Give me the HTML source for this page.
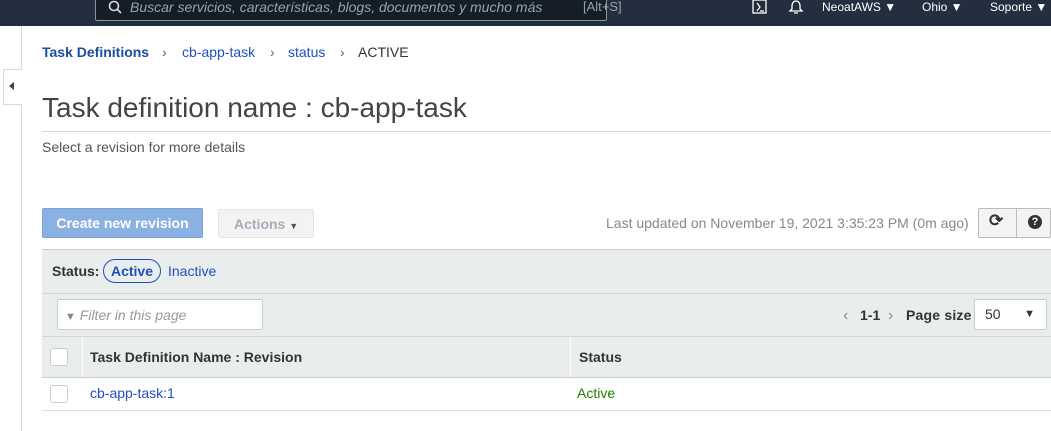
<!DOCTYPE html>
<html><head><style>
*{box-sizing:border-box;margin:0;padding:0}
body{width:1051px;height:431px;overflow:hidden;background:#fff;font-family:"Liberation Sans",sans-serif;position:relative;color:#444}
.a{position:absolute}
.nav{left:0;top:0;width:1051px;height:26px;background:#232f3e}
.search{left:95px;top:-6px;width:512px;height:27px;border:1px solid #879596;border-radius:2px;background:#141d28}
.nv{color:#fff;font-size:12px;top:0}
a{color:#1f4fbf;text-decoration:none}
</style></head><body>
<div class="a nav"></div>
<div class="a search"></div>
<svg class="a" style="left:108px;top:0" width="14" height="16"><circle cx="6" cy="6" r="4.5" stroke="#d5dbdb" stroke-width="1.6" fill="none"/><line x1="9.5" y1="9.5" x2="13" y2="13" stroke="#d5dbdb" stroke-width="1.6"/></svg>
<div class="a" style="left:130px;top:-1px;font-size:14px;font-style:italic;color:#95a5a6">Buscar servicios, características, blogs, documentos y mucho más</div>
<div class="a" style="left:583px;top:-1px;font-size:13px;color:#95a5a6">[Alt+S]</div>
<svg class="a" style="left:752px;top:0" width="16" height="14"><rect x="1" y="0" width="13" height="13" fill="none" stroke="#fff" stroke-width="1.3"/><path d="M5 3l3 4-3 4M8 11h4" stroke="#fff" fill="none" stroke-width="1.2"/></svg>
<svg class="a" style="left:788px;top:0" width="16" height="16"><path d="M8 1c-3 0-4 3-4 5v3l-2 2h12l-2-2V6c0-2-1-5-4-5zM6 13h4" stroke="#fff" fill="none" stroke-width="1.3"/></svg>
<div class="a nv" style="left:822px">NeoatAWS ▼</div>
<div class="a nv" style="left:922px">Ohio ▼</div>
<div class="a nv" style="left:990px">Soporte ▼</div>

<div class="a" style="left:21px;top:26px;width:1px;height:405px;background:#d5dbdb"></div>
<div class="a" style="left:3px;top:69px;width:19px;height:36px;border:1px solid #d5dbdb;border-right:none;background:#fff"></div>
<div class="a" style="left:9px;top:82px;width:0;height:0;border-top:4px solid transparent;border-bottom:4px solid transparent;border-right:5px solid #444"></div>

<div class="a" style="left:42px;top:44px;font-size:14px;color:#333"><a style="font-weight:bold;color:#1a4ea0">Task Definitions</a></div>
<div class="a" style="left:162px;top:44px;font-size:14px;color:#666">›</div>
<div class="a" style="left:182px;top:44px;font-size:14px"><a>cb-app-task</a></div>
<div class="a" style="left:270px;top:44px;font-size:14px;color:#666">›</div>
<div class="a" style="left:288px;top:44px;font-size:14px"><a>status</a></div>
<div class="a" style="left:340px;top:44px;font-size:14px;color:#666">›</div>
<div class="a" style="left:358px;top:44px;font-size:14px;color:#333">ACTIVE</div>
<div class="a" style="left:42px;top:92px;font-size:28px;color:#444">Task definition name : cb-app-task</div>
<div class="a" style="left:42px;top:131px;width:1009px;height:1px;background:#d5dbdb"></div>
<div class="a" style="left:42px;top:139px;font-size:14px;color:#555">Select a revision for more details</div>

<div class="a" style="left:42px;top:208px;width:161px;height:30px;background:#8bb0e2;border:1px solid #7aa3dc;border-radius:2px;color:#fff;font-weight:bold;font-size:14px;text-align:center;line-height:28px">Create new revision</div>
<div class="a" style="left:218px;top:209px;width:96px;height:29px;background:#f2f3f3;border:1px solid #e4e6e6;border-radius:2px;color:#aab;font-weight:bold;font-size:14px;line-height:29px;padding-left:15px">Actions <span style="font-size:9px;color:#555">▼</span></div>
<div class="a" style="left:606px;top:215px;font-size:14px;color:#888">Last updated on November 19, 2021 3:35:23 PM (0m ago)</div>
<div class="a" style="left:978px;top:208px;width:73px;height:30px;background:#f2f3f3;border:1px solid #bbb;border-radius:2px"></div>
<div class="a" style="left:1016px;top:208px;width:1px;height:30px;background:#bbb"></div>
<div class="a" style="left:989px;top:211px;font-size:17px;font-weight:bold;color:#333">⟳</div>
<div class="a" style="left:1028px;top:215px;width:14px;height:14px;border-radius:7px;background:#333;color:#fff;font-size:11px;font-weight:bold;text-align:center;line-height:14px">?</div>

<div class="a" style="left:42px;top:249px;width:1009px;height:128px;background:#eaeded;border-top:1px solid #ccc"></div>
<div class="a" style="left:42px;top:293px;width:1009px;height:1px;background:#d5d5d5"></div>
<div class="a" style="left:42px;top:336px;width:1009px;height:1px;background:#d5d5d5"></div>
<div class="a" style="left:52px;top:263px;font-size:14px;font-weight:bold;color:#333">Status:</div>
<div class="a" style="left:103px;top:259px;width:58px;height:24px;border:1px solid #1f4fbf;border-radius:12px;text-align:center;line-height:22px;font-size:14px;font-weight:bold;color:#1f4fbf">Active</div>
<div class="a" style="left:168px;top:263px;font-size:14px;color:#1f4fbf">Inactive</div>
<div class="a" style="left:57px;top:299px;width:206px;height:31px;background:#fff;border:1px solid #ccc;border-radius:2px"></div>
<div class="a" style="left:65px;top:307px;font-size:14px;font-style:italic;color:#999"><span style="font-style:normal;font-size:11px;color:#888">▼</span> Filter in this page</div>
<div class="a" style="left:843px;top:307px;font-size:16px;color:#888">‹</div>
<div class="a" style="left:860px;top:307px;font-size:14px;font-weight:bold;color:#333">1-1</div>
<div class="a" style="left:888px;top:307px;font-size:16px;color:#888">›</div>
<div class="a" style="left:906px;top:307px;font-size:14px;font-weight:bold;color:#333;letter-spacing:0.2px">Page size</div>
<div class="a" style="left:974px;top:299px;width:73px;height:31px;background:#fff;border:1px solid #ccc;border-radius:2px;font-size:14px;line-height:29px;padding-left:10px;color:#333">50<span style="position:absolute;right:11px;font-size:11px">▼</span></div>
<div class="a" style="left:82px;top:337px;width:1px;height:40px;background:#fff"></div>
<div class="a" style="left:570px;top:337px;width:1px;height:40px;background:#fff"></div>
<div class="a" style="left:50px;top:348px;width:18px;height:18px;background:#fff;border:1px solid #ccc;border-radius:3px"></div>
<div class="a" style="left:90px;top:349px;font-size:14px;font-weight:bold;color:#333">Task Definition Name : Revision</div>
<div class="a" style="left:579px;top:349px;font-size:14px;font-weight:bold;color:#333">Status</div>
<div class="a" style="left:42px;top:377px;width:1009px;height:1px;background:#ccc"></div>
<div class="a" style="left:50px;top:385px;width:18px;height:18px;background:#fff;border:1px solid #ccc;border-radius:3px"></div>
<div class="a" style="left:90px;top:385px;font-size:14px;color:#1f4fbf">cb-app-task:1</div>
<div class="a" style="left:577px;top:385px;font-size:14px;color:#1d8102">Active</div>
<div class="a" style="left:42px;top:410px;width:1009px;height:1px;background:#ddd"></div>
</body></html>
